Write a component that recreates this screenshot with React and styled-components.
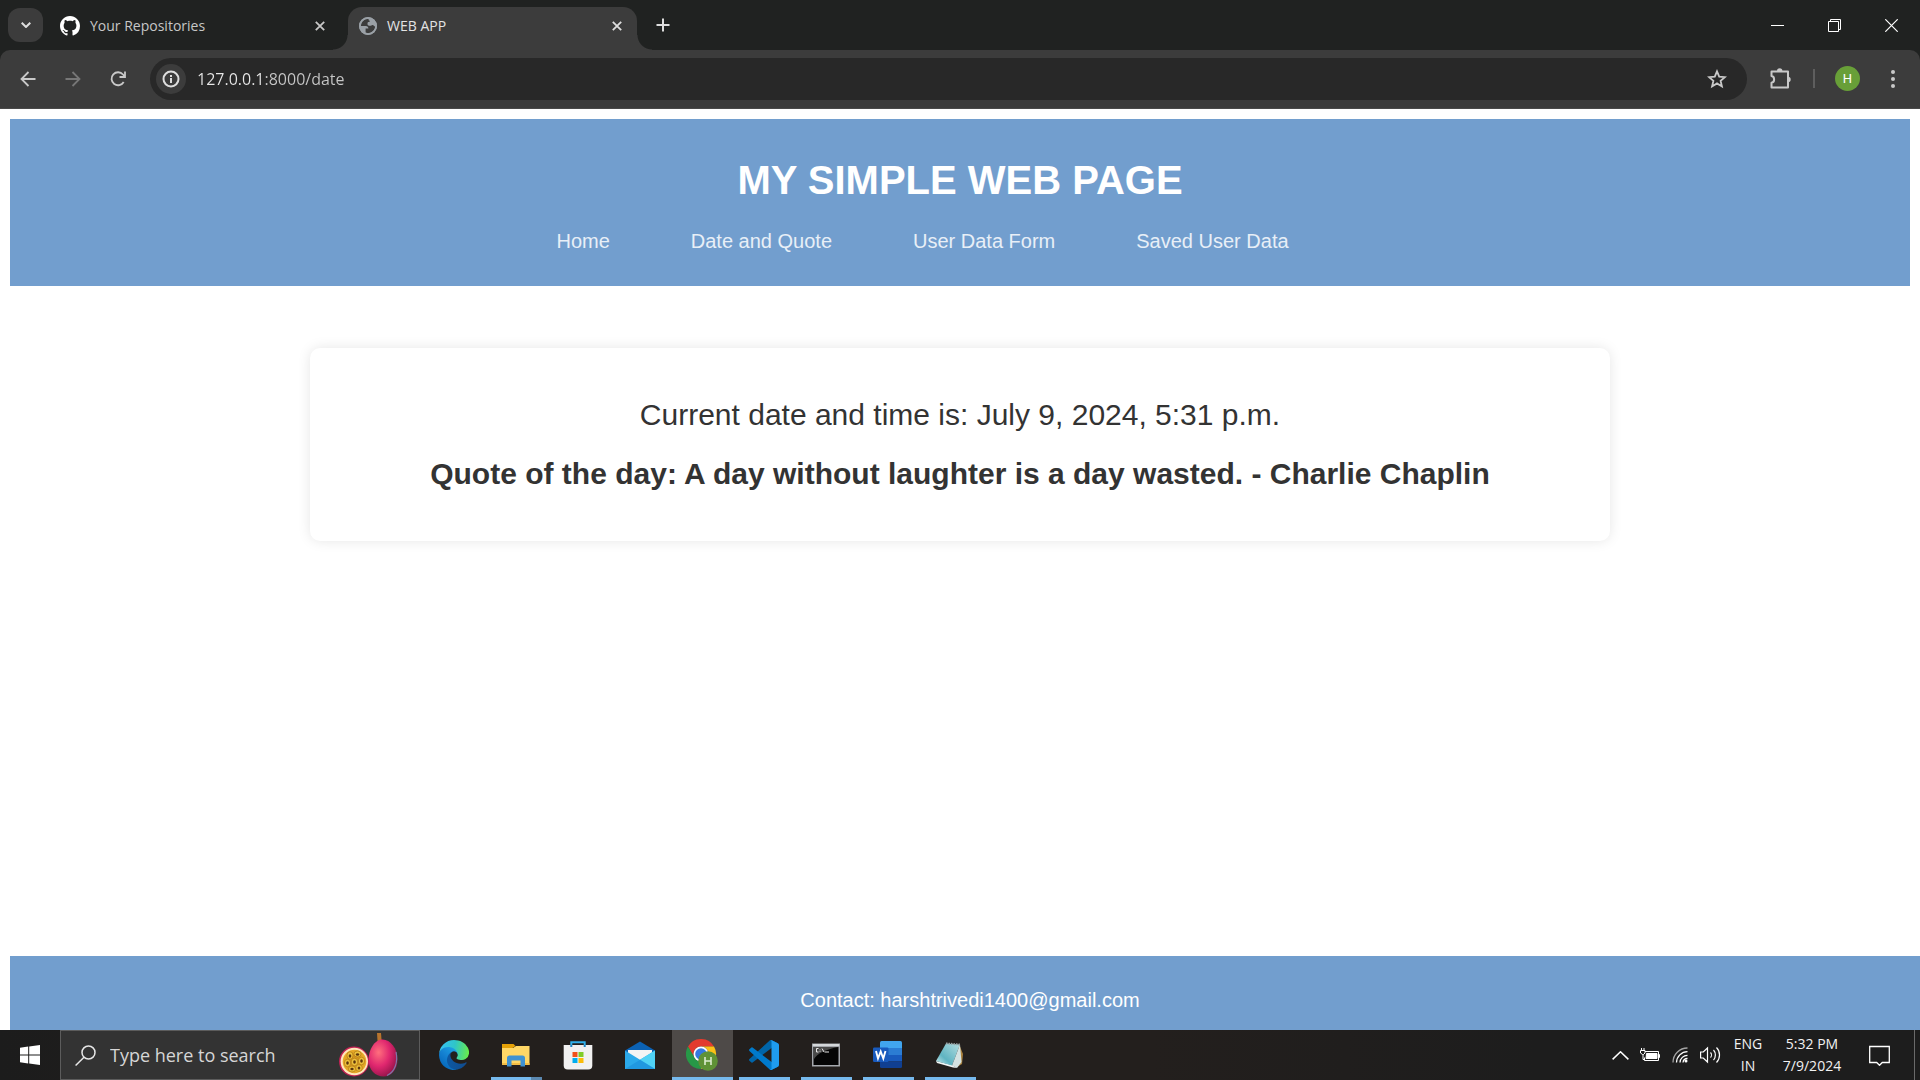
import React from "react";
import styled, { createGlobalStyle, css } from "styled-components";

const UI_FONT = `"Segoe UI", "Open Sans", "Noto Sans", sans-serif`;
const PAGE_FONT = `Arial, "Liberation Sans", sans-serif`;

const GlobalStyle = createGlobalStyle`
  *, *::before, *::after { box-sizing: border-box; }
  body { margin: 0; background: #fff; font-family: ${UI_FONT}; overflow: hidden; }
  button, input { font: inherit; }
  svg { display: block; flex: none; }
`;

const Screen = styled.div`
  display: flex;
  flex-direction: column;
  height: 100vh;
`;

/* ---------- browser chrome ---------- */

const TabStrip = styled.div`
  display: flex;
  align-items: center;
  height: 50px;
  padding-left: 8px;
  background: #202221;
`;

const plainButton = css`
  display: flex;
  align-items: center;
  justify-content: center;
  flex: none;
  padding: 0;
  border: 0;
  background: transparent;
  color: inherit;
`;

const IconButton = styled.button`
  ${plainButton}
  width: ${(p) => p.$w || 45}px;
  height: ${(p) => p.$h || 34}px;
  border-radius: ${(p) => p.$radius || 0}px;
  background: ${(p) => p.$bg || "transparent"};
  color: ${(p) => p.$color || "#dedede"};
`;

const Tab = styled.div`
  position: relative;
  display: flex;
  align-items: center;
  gap: 10px;
  width: ${(p) => (p.$active ? 289 : 305)}px;
  height: 43px;
  margin-top: 7px;
  padding: 0 10px 6px ${(p) => (p.$active ? 11 : 17)}px;
  border-radius: 14px 14px 0 0;
  background: ${(p) => (p.$active ? "#3c3c3c" : "transparent")};
  color: ${(p) => (p.$active ? "#e3e3e3" : "#c7c7c7")};
  font-size: 14px;
  line-height: 20px;

  ${(p) =>
    p.$active &&
    css`
      &::before,
      &::after {
        content: "";
        position: absolute;
        bottom: 0;
        width: 15px;
        height: 15px;
      }
      &::before {
        left: -15px;
        background: radial-gradient(circle at 0 0, transparent 14px, #3c3c3c 15px);
      }
      &::after {
        right: -15px;
        background: radial-gradient(circle at 100% 0, transparent 14px, #3c3c3c 15px);
      }
    `}
`;

const TabTitle = styled.span`
  flex: 1;
  white-space: nowrap;
`;

const WindowControls = styled.div`
  display: flex;
  margin-left: auto;
  height: 50px;
  align-items: center;
`;

const ToolbarBack = styled.div`
  background: #202221;
`;

const Toolbar = styled.div`
  display: flex;
  align-items: center;
  height: 59px;
  padding: 0 5px 1px;
  border-radius: 10px 10px 0 0;
  border-bottom: 1px solid #4a4a4a;
  background: #3c3c3c;
`;

const AddressBar = styled.label`
  display: flex;
  align-items: center;
  flex: 1;
  gap: 11px;
  height: 42px;
  margin-left: 10px;
  padding: 0 8px 0 6px;
  border-radius: 21px;
  background: #282828;
`;

const AddressInput = styled.input`
  flex: 1;
  min-width: 0;
  padding: 0;
  border: 0;
  outline: 0;
  background: linear-gradient(90deg, #e8e8e8 67px, #c7c7c7 67px);
  background-clip: text;
  color: transparent;
  font-size: 16px;
  line-height: 24px;
`;

const Divider = styled.span`
  width: 2px;
  height: 19px;
  margin-right: 10px;
  background: #5e5e5e;
`;

const Avatar = styled.span`
  display: flex;
  align-items: center;
  justify-content: center;
  width: 25px;
  height: 25px;
  border-radius: 50%;
  background: #689f38;
  color: #fff;
  font-size: 13px;
  line-height: 16px;
  font-family: Roboto, sans-serif;
`;

/* ---------- web page ---------- */

const Viewport = styled.div`
  display: flex;
  flex-direction: column;
  flex: 1;
  min-height: 0;
  padding-top: 10px;
  background: #fff;
  font-family: ${PAGE_FONT};
`;

const PageHeader = styled.header`
  margin: 0 10px;
  padding: 38px 0 33px;
  background: #729ece;
  text-align: center;
`;

const PageTitle = styled.h1`
  margin: 0;
  color: #fff;
  font-size: 40px;
  line-height: 46px;
`;

const Nav = styled.nav`
  display: flex;
  justify-content: center;
  gap: 81px;
  margin-top: 27px;
  padding-right: 75px;
`;

const NavLink = styled.a`
  color: #e8eff7;
  font-size: 20px;
  line-height: 23px;
  text-decoration: none;
`;

const Card = styled.main`
  display: flex;
  flex-direction: column;
  align-items: center;
  gap: 25px;
  width: 100%;
  max-width: 1300px;
  margin: 62px auto 0;
  padding: 50px 25px;
  border-radius: 10px;
  background: #fff;
  box-shadow: 0 0 13px rgba(0, 0, 0, 0.1);
`;

const CardText = styled.p`
  margin: 0;
  color: #333;
  font-size: 30px;
  font-weight: ${(p) => (p.$bold ? 700 : 400)};
  line-height: 34px;
`;

const PageFooter = styled.footer`
  display: flex;
  justify-content: center;
  height: 74px;
  margin: auto 0 0 10px;
  padding: 33px 0 0 10px;
  background: #729ece;
  color: #fff;
  font-size: 20px;
  line-height: 23px;
`;

/* ---------- taskbar ---------- */

const Taskbar = styled.div`
  display: flex;
  align-items: stretch;
  height: 50px;
  background: linear-gradient(90deg, #1c1c1c 0, #231f1d 420px, #231f1d 60%, #1d1d1d 80%);
  color: #fff;
`;

const StartButton = styled.button`
  ${plainButton}
  width: 60px;
`;

const SearchBox = styled.label`
  display: flex;
  align-items: center;
  width: 360px;
  padding: 0 20px 0 14px;
  gap: 14px;
  border: 1px solid #5c5c5c;
  background: #333;
`;

const SearchInput = styled.input`
  flex: 1;
  min-width: 0;
  padding: 0;
  border: 0;
  outline: 0;
  background: transparent;
  font-size: 18px;
  line-height: 26px;
  &::placeholder { color: #d6d6d6; opacity: 1; }
`;

const AppRow = styled.div`
  display: flex;
  gap: 1px;
  padding-left: 4px;
`;

const AppButton = styled.button`
  ${plainButton}
  position: relative;
  width: 61px;
  padding-right: 2px;
  background: ${(p) => (p.$active ? "#4e4a48" : "transparent")};
  &::after {
    content: "";
    position: absolute;
    right: ${(p) => (p.$active ? 0 : 5)}px;
    bottom: 0;
    left: ${(p) => (p.$active ? 0 : 5)}px;
    height: 3px;
    background: ${(p) =>
      !p.$running
        ? "transparent"
        : p.$stacked
          ? "linear-gradient(90deg, #76b9ed 40px, #5b88b0 40px)"
          : "#76b9ed"};
  }
`;

const Tray = styled.div`
  display: flex;
  align-items: center;
  margin-left: auto;
`;

const TrayButton = styled.button`
  ${plainButton}
  width: ${(p) => p.$w || 30}px;
  height: 50px;
`;

const TrayText = styled.button`
  ${plainButton}
  flex-direction: column;
  width: ${(p) => p.$w}px;
  height: 50px;
  color: #f2f2f2;
  font-size: 14px;
  line-height: 22px;
`;

const ShowDesktop = styled.button`
  ${plainButton}
  width: 6px;
  height: 50px;
  margin-left: 9px;
  border-left: 1px solid #6a6a6a;
`;

/* ---------- icons ---------- */

const Line = ({ w = 24, h, vb, sw = 2, children, ...rest }) => (
  <svg width={w} height={h || w} viewBox={vb || `0 0 ${w} ${h || w}`} fill="none" stroke="currentColor" strokeWidth={sw} {...rest}>
    {children}
  </svg>
);

const Close = () => (
  <Line w={10} sw={1.8}><path d="M.8.8l8.400 8.400M9.200.8L.8 9.200" /></Line>
);

const GithubMark = () => (
  <svg width="20" height="20" viewBox="0 0 16 16" fill="#fff">
    <path d="M8 0C3.58 0 0 3.58 0 8c0 3.54 2.29 6.53 5.47 7.59.4.07.55-.17.55-.38 0-.19-.01-.82-.01-1.49-2.01.37-2.53-.49-2.69-.94-.09-.23-.48-.94-.82-1.13-.28-.15-.68-.52-.01-.53.63-.01 1.08.58 1.23.82.72 1.21 1.87.87 2.33.66.07-.52.28-.87.51-1.07-1.78-.2-3.64-.89-3.64-3.95 0-.87.31-1.59.82-2.15-.08-.2-.36-1.02.08-2.12 0 0 .67-.21 2.2.82.64-.18 1.32-.27 2-.27s1.36.09 2 .27c1.53-1.04 2.2-.82 2.2-.82.44 1.1.16 1.92.08 2.12.51.56.82 1.27.82 2.15 0 3.07-1.87 3.75-3.65 3.95.29.25.54.73.54 1.48 0 1.07-.01 1.93-.01 2.2 0 .21.15.46.55.38A8.01 8.01 0 0 0 16 8c0-4.42-3.58-8-8-8z" />
  </svg>
);

const Globe = () => (
  <svg width="18" height="18" viewBox="0 0 18 18">
    <circle cx="9" cy="9" r="9" fill="#9aa0a6" />
    <path d="M9.600 2.100C5.300 1.600 1.800 5 1.800 9h5.100c1.600 0 2.500 1 2.500 2.400H6.600v4.300c4.700 1.700 9.300-1.500 9.600-6.200-1.300-.2-1.300-1.500-2.600-1.600-1-.1-1.300.9-2.600.9-1.700 0-2.500-.8-2.500-1.900 0-1.300 1-2 2.400-1.900.9 0 .8-1.300-.2-1.300C9.400 3.700 9.600 2.800 9.600 2.100z" fill="#3c3c3c" />
    <path d="M10.500 2c1 1.300.6 2.900-.9 3.100-1.200.1-1.200 1.600.100 1.700 1.500.1 1.200 1.200 2.600.9 1.500-.4 2.600.4 3.900 1.300C16.500 5.500 14 2.500 10.500 2z" fill="#9aa0a6" />
    <circle cx="9" cy="9" r="8.100" fill="none" stroke="#9aa0a6" strokeWidth="1.800" />
  </svg>
);

const WindowsLogo = () => (
  <svg width="20" height="20" viewBox="0 0 20 20" fill="#fff">
    <path d="M0 2.800L8.200 1.600V9.500H0zM9.200 1.500L20 0v9.500H9.200zM0 10.500h8.200v7.900L0 17.200zM9.200 10.500H20V20L9.200 18.500z" />
  </svg>
);

const Fruit = () => (
  <svg width="60" height="46" viewBox="0 0 60 46">
    <defs>
      <radialGradient id="fruit" cx=".35" cy=".35" r=".75">
        <stop offset="0" stopColor="#ff6f7d" />
        <stop offset=".5" stopColor="#e0276f" />
        <stop offset="1" stopColor="#8b1145" />
      </radialGradient>
      <radialGradient id="pulp">
        <stop offset="0" stopColor="#c98a18" />
        <stop offset="1" stopColor="#e8ab28" />
      </radialGradient>
    </defs>
    <path d="M38 1h4l.8 10h-4.200z" fill="#b8742e" />
    <path d="M43.500 7.500c8 0 15 9 15 20 0 10-6 17-14 17S29.500 38 29.500 28 35.500 7.500 43.500 7.500z" fill="url(#fruit)" />
    <path d="M57 20c2 9-.5 20-9 23.500" fill="none" stroke="#7d78a8" strokeWidth="1.200" />
    <circle cx="15" cy="29.500" r="15" fill="#c22154" />
    <circle cx="15.300" cy="29.500" r="13.700" fill="#ffe6bd" />
    <circle cx="15.500" cy="29.500" r="11.800" fill="url(#pulp)" />
    <g fill="#ecc03c" stroke="#a96f10" strokeWidth=".6">
      <ellipse cx="11" cy="23.500" rx="3" ry="3.800" /><ellipse cx="18.500" cy="22" rx="3.600" ry="3" /><ellipse cx="8.500" cy="31" rx="3.200" ry="3.800" />
      <ellipse cx="15.500" cy="30" rx="3.300" ry="3.800" /><ellipse cx="22.500" cy="29" rx="3.200" ry="3.800" /><ellipse cx="13" cy="37" rx="3.600" ry="3" /><ellipse cx="20" cy="36" rx="3.300" ry="3.300" />
    </g>
    <g fill="#5c350e">
      <ellipse cx="11" cy="24" rx="1.300" ry="1.800" /><ellipse cx="18.500" cy="22.500" rx="1.700" ry="1.300" /><ellipse cx="8.500" cy="31" rx="1.300" ry="1.800" />
      <ellipse cx="15.500" cy="30" rx="1.300" ry="1.800" /><ellipse cx="22.500" cy="29" rx="1.300" ry="1.800" /><ellipse cx="13" cy="37" rx="1.700" ry="1.300" /><ellipse cx="20" cy="36" rx="1.300" ry="1.600" />
    </g>
  </svg>
);

const Edge = () => (
  <svg width="30" height="30" viewBox="0 0 256 256">
    <defs>
      <linearGradient id="e1" x1="63" y1="178" x2="242" y2="178" gradientUnits="userSpaceOnUse">
        <stop offset="0" stopColor="#0c59a4" /><stop offset="1" stopColor="#114a8b" />
      </linearGradient>
      <linearGradient id="e2" x1="150" y1="100" x2="40" y2="230" gradientUnits="userSpaceOnUse">
        <stop offset="0" stopColor="#1b9de2" /><stop offset=".5" stopColor="#1480d0" /><stop offset="1" stopColor="#0669bc" />
      </linearGradient>
      <linearGradient id="e3" x1="10" y1="60" x2="250" y2="100" gradientUnits="userSpaceOnUse">
        <stop offset="0" stopColor="#35c1f1" /><stop offset=".5" stopColor="#2fc5c8" /><stop offset="1" stopColor="#66eb4e" />
      </linearGradient>
    </defs>
    <path d="M231 190.500c-3.400 1.800-6.900 3.400-10.500 4.700a101 101 0 0 1-35.700 6.400c-47 0-88-32.300-88-73.800a31.300 31.300 0 0 1 16.400-27.300c-42.500 1.800-53.500 46.200-53.500 72 0 73.200 67.400 80.600 82 80.600 7.800 0 19.600-2.300 26.700-4.600l1.300-.4a127.900 127.900 0 0 0 66.400-52.700 4 4 0 0 0-5.100-4.900z" fill="url(#e1)" />
    <path d="M105.700 241.400a79.200 79.200 0 0 1-22.700-21.300A80.700 80.700 0 0 1 112.600 100.600c3.200-1.500 8.500-4.100 15.600-4a32.400 32.400 0 0 1 25.700 13 31.900 31.900 0 0 1 6.400 18.700c0-.2 24.500-79.600-80-79.600C36.400 48.700.3 90.400.3 127a130 130 0 0 0 12.100 56A128 128 0 0 0 169 249.800a75.500 75.500 0 0 1-63.100-8.300z" fill="url(#e2)" />
    <path d="M152.300 148.900c-.8 1-3.300 2.500-3.300 5.700 0 2.600 1.700 5.100 4.700 7.200 14.500 10 41.700 8.700 41.800 8.700a60 60 0 0 0 30.500-8.400A61.800 61.800 0 0 0 256.500 108.800c.3-22.400-8-37.300-11.300-43.900C223.900 23.200 177.700 0 128.300 0A128 128 0 0 0 .3 126.200c.5-36.500 36.800-66 80-66 3.500 0 23.500.3 42 10a72.600 72.600 0 0 1 30.900 29.300c6.100 10.600 7.200 24.100 7.200 29.500s-2.700 13.300-8.100 20z" fill="url(#e3)" />
  </svg>
);

const Folder = () => (
  <svg width="28" height="24" viewBox="0 0 28 24">
    <path d="M0 5h11l3-2h13.500v19H0z" fill="#ffd766" />
    <path d="M0 1h11.500l2 2-3 2H0z" fill="#e5a107" />
    <path d="M0 20h27.500v2H0z" fill="#f3bd45" />
    <path d="M7.500 12.500h13A2.500 2.500 0 0 1 23 15v8.500h-4.500v-6h-9v6H5V15a2.500 2.500 0 0 1 2.500-2.500z" fill="#3f92d2" />
  </svg>
);

const Store = () => (
  <svg width="30" height="30" viewBox="0 0 30 30">
    <path d="M8.300 8V2.200h13.400V8" fill="none" stroke="#2fb0ec" strokeWidth="2" />
    <path d="M.7 5h28.600v20.500a4 4 0 0 1-4 4H4.700a4 4 0 0 1-4-4z" fill="#f1f1f1" />
    <path d="M7.300 5h2v2h-2zM20.700 5h2v2h-2z" fill="#1c84c5" />
    <path d="M9.500 12h5v5h-5z" fill="#f1511b" /><path d="M15.500 12h5v5h-5z" fill="#80cc28" />
    <path d="M9.500 18h5v5h-5z" fill="#00adef" /><path d="M15.500 18h5v5h-5z" fill="#fbbc09" />
  </svg>
);

const MailApp = () => (
  <svg width="30" height="28" viewBox="0 0 30 28">
    <path d="M0 9.500L15 .5l15 9V12H0z" fill="#0b62b5" /><path d="M3 9h24v10H3z" fill="#f4f4f4" />
    <path d="M0 9.500l15 9.200 15-9.200V28H0z" fill="#2ba9ea" /><path d="M30 9.500V28L15 18.700z" fill="#50d2f5" />
    <path d="M0 28l15-9.300L30 28z" fill="#1c91dc" opacity=".7" />
  </svg>
);

const ChromeApp = () => (
  <svg width="32" height="32" viewBox="0 0 32 32">
    <path d="M2 7.500A15 15 0 0 1 28 7.500H15A7.500 7.500 0 0 0 8.500 18.750z" fill="#e33b2e" />
    <path d="M2 7.500L8.500 18.750A7.500 7.500 0 0 0 21.500 18.750L15 30A15 15 0 0 1 2 7.500z" fill="#279847" />
    <path d="M28 7.500A15 15 0 0 1 15 30L21.500 18.750A7.500 7.500 0 0 0 15 7.500z" fill="#fbc116" />
    <circle cx="15" cy="15" r="7.500" fill="#fff" /><circle cx="15" cy="15" r="5.800" fill="#3479e0" />
    <circle cx="22" cy="22" r="9.800" fill="#5f9236" />
    <path d="M19 18v8M25 18v8M19 22h6" stroke="#dcebcf" strokeWidth="1.600" />
  </svg>
);

const CodeApp = () => (
  <svg width="30" height="30" viewBox="0 0 100 100">
    <path d="M96 11L76 1a6 6 0 0 0-7 1L1.500 63.500a4 4 0 0 0 0 6l5.500 5a4 4 0 0 0 5 .2L93 13c3-2 7 0 7 3.500V16a6 6 0 0 0-4-5z" fill="#0065a9" />
    <path d="M96 89L76 99a6 6 0 0 1-7-1L1.500 36.500a4 4 0 0 1 0-6l5.500-5a4 4 0 0 1 5-.2L93 87c3 2 7 0 7-3.500V84a6 6 0 0 1-4 5z" fill="#007acc" />
    <path d="M76 99a6 6 0 0 1-7-1c2 2 6 .7 6-2.600V4.600C75 1.300 71 0 69 2a6 6 0 0 1 7-1l20 10a6 6 0 0 1 4 5.600v67A6 6 0 0 1 96 89z" fill="#1f9cf0" />
  </svg>
);

const Terminal = () => (
  <svg width="28" height="24" viewBox="0 0 28 24">
    <path d="M0 .5h28v23H0z" fill="#a5a8ad" /><path d="M1 1h26v2H1z" fill="#d5d8db" />
    <path d="M1.500 4h25v18h-25z" fill="#050505" /><path d="M1.500 4h25C15 6 5 10 1.500 17z" fill="#494949" />
    <path d="M6.500 5.500H4.500v3.500h2M8 6.500v.8M8 8.300v.7M10 5.500l2 3.500M12.500 9H17" fill="none" stroke="#e8e8e8" strokeWidth="1" />
  </svg>
);

const WordApp = () => (
  <svg width="30" height="28" viewBox="0 0 30 28">
    <path d="M7 1.500A1.500 1.500 0 0 1 8.500 0h19A1.500 1.500 0 0 1 29 1.500V7H7z" fill="#41a5ee" />
    <path d="M7 7h22v7H7z" fill="#2b7cd3" /><path d="M7 14h22v6.500H7z" fill="#185abd" />
    <path d="M7 20.500h22v5a1.500 1.500 0 0 1-1.500 1.500h-19A1.500 1.500 0 0 1 7 25.500z" fill="#103f91" />
    <rect y="6.500" width="15.500" height="14.500" rx="1.300" fill="#185abd" />
    <path d="M3 10l2 7.500 2.700-7 2.600 7 2.200-7.500" fill="none" stroke="#fff" strokeWidth="1.900" />
  </svg>
);

const Notepad = () => (
  <svg width="30" height="28" viewBox="0 0 30 28">
    <defs>
      <linearGradient id="pad" x1="0" y1="1" x2="1" y2="0">
        <stop offset="0" stopColor="#d5f0f1" />
        <stop offset=".35" stopColor="#5fb4c2" />
        <stop offset="1" stopColor="#b5dde0" />
      </linearGradient>
    </defs>
    <path d="M24 3l4 10-1 10-5 3z" fill="#a9803c" />
    <path d="M1 20l16 4 5 3-4-.500L2 22z" fill="#f2f6f5" />
    <path d="M11 2.500L25 3.500 17 24.500 1 20z" fill="url(#pad)" />
    <path d="M25 3.500L26.500 21l-4.500 6-5-2.500z" fill="#d4e3e3" />
    <path d="M11 2.500L25 3.500" stroke="#98a3a5" strokeWidth="2" strokeDasharray="1.500 1" />
  </svg>
);

const apps = [
  { name: "Microsoft Edge", icon: <Edge /> },
  { name: "File Explorer", icon: <Folder />, running: true, stacked: true },
  { name: "Microsoft Store", icon: <Store /> },
  { name: "Mail", icon: <MailApp /> },
  { name: "Google Chrome", icon: <ChromeApp />, running: true, active: true },
  { name: "Visual Studio Code", icon: <CodeApp />, running: true },
  { name: "Command Prompt", icon: <Terminal />, running: true },
  { name: "Word", icon: <WordApp />, running: true },
  { name: "Notepad", icon: <Notepad />, running: true },
];

const links = ["Home", "Date and Quote", "User Data Form", "Saved User Data"];

function BrowserChrome() {
  return (
    <>
      <TabStrip>
        <IconButton $w={35} $radius={12} $bg="#3c3c3c" aria-label="Search tabs">
          <Line w={10} h={6} sw={2}><path d="M.7.7L5 5 9.300.7" /></Line>
        </IconButton>
        <Tab>
          <GithubMark />
          <TabTitle>Your Repositories</TabTitle>
          <IconButton $w={36} $h={24} $color="#c7c7c7" aria-label="Close tab"><Close /></IconButton>
        </Tab>
        <Tab $active>
          <Globe />
          <TabTitle>WEB APP</TabTitle>
          <IconButton $w={20} $h={20} aria-label="Close tab"><Close /></IconButton>
        </Tab>
        <IconButton $w={52} aria-label="New tab">
          <Line w={14} sw={2}><path d="M7 .5v13M.5 7h13" /></Line>
        </IconButton>
        <WindowControls>
          <IconButton $w={57} aria-label="Minimize">
            <Line w={13} h={1} sw={1} stroke="#fff"><path d="M0 .5h13" /></Line>
          </IconButton>
          <IconButton $w={57} aria-label="Restore">
            <Line w={13} sw={1} stroke="#fff"><path d="M.5 2.500h10v10H.5zM2.500 2.500v-2h10v10h-2" /></Line>
          </IconButton>
          <IconButton $w={57} aria-label="Close">
            <Line w={13} sw={1.2} stroke="#fff"><path d="M.3.3l12.400 12.400M12.700.3L.3 12.700" /></Line>
          </IconButton>
        </WindowControls>
      </TabStrip>
      <ToolbarBack>
        <Toolbar>
          <IconButton $color="#c9c9c9" aria-label="Back">
            <Line w={16} sw={1.8}><path d="M15.500 8H1.800M8.500 1L1.500 8l7 7" /></Line>
          </IconButton>
          <IconButton $color="#777" aria-label="Forward">
            <Line w={16} sw={1.8}><path d="M.5 8h13.700M7.500 1l7 7-7 7" /></Line>
          </IconButton>
          <IconButton $color="#c9c9c9" aria-label="Reload">
            <Line w={16} sw={1.8}><path d="M13.700 11A6.500 6.500 0 1 1 13 3.500L15 5.800M15 .5v5.500H9.500" /></Line>
          </IconButton>
          <AddressBar>
            <IconButton $w={30} $h={30} $radius={15} $bg="#3c3c3c" aria-label="Site information">
              <Line w={18}><circle cx="9" cy="9" r="7.500" /><path d="M9 8v5M9 5v2" /></Line>
            </IconButton>
            <AddressInput aria-label="Address" defaultValue="127.0.0.1:8000/date" />
            <IconButton $color="#c9c9c9" aria-label="Bookmark">
              <Line w={20} sw={1.8}><path d="M10 2.300l2.200 5.300 5.700.5-4.300 3.700 1.300 5.600-4.900-3-4.900 3 1.300-5.600L2.100 8.100l5.700-.5z" /></Line>
            </IconButton>
          </AddressBar>
          <IconButton $w={66} $color="#c9c9c9" aria-label="Extensions">
            <Line w={21}>
              <path d="M1.500 3.500h16.500v16H1.500v-4.800c3.500-.6 3.500-6 0-6.600z" strokeLinejoin="round" />
              <path d="M7 3a2.700 2.700 0 0 1 5.400 0zM18 8.800a2.700 2.700 0 0 1 0 5.400z" fill="currentColor" stroke="none" />
            </Line>
          </IconButton>
          <Divider />
          <IconButton $w={45} aria-label="Profile"><Avatar>H</Avatar></IconButton>
          <IconButton $w={45} $color="#c9c9c9" aria-label="Menu">
            <svg width="4" height="18" viewBox="0 0 4 18" fill="currentColor">
              <circle cx="2" cy="2" r="2" /><circle cx="2" cy="9" r="2" /><circle cx="2" cy="16" r="2" />
            </svg>
          </IconButton>
        </Toolbar>
      </ToolbarBack>
    </>
  );
}

function WebPage() {
  return (
    <Viewport>
      <PageHeader>
        <PageTitle>MY SIMPLE WEB PAGE</PageTitle>
        <Nav>
          {links.map((label) => (
            <NavLink key={label} href="#">{label}</NavLink>
          ))}
        </Nav>
      </PageHeader>
      <Card>
        <CardText>Current date and time is: July 9, 2024, 5:31 p.m.</CardText>
        <CardText $bold>Quote of the day: A day without laughter is a day wasted. - Charlie Chaplin</CardText>
      </Card>
      <PageFooter>Contact: harshtrivedi1400@gmail.com</PageFooter>
    </Viewport>
  );
}

function WindowsTaskbar() {
  return (
    <Taskbar>
      <StartButton aria-label="Start"><WindowsLogo /></StartButton>
      <SearchBox>
        <Line w={21} sw={1.5} stroke="#e6e6e6"><circle cx="13.500" cy="7.500" r="6.500" /><path d="M9 12.300L.6 20.500" /></Line>
        <SearchInput aria-label="Search" placeholder="Type here to search" />
        <Fruit />
      </SearchBox>
      <AppRow>
        {apps.map((app) => (
          <AppButton
            key={app.name}
            aria-label={app.name}
            $running={app.running}
            $active={app.active}
            $stacked={app.stacked}
          >
            {app.icon}
          </AppButton>
        ))}
      </AppRow>
      <Tray>
        <TrayButton aria-label="Show hidden icons">
          <Line w={17} h={9} sw={1.5}><path d="M.6 8.400L8.500.8l7.900 7.600" /></Line>
        </TrayButton>
        <TrayButton aria-label="Battery">
          <Line w={20} h={14} sw={1}>
            <path d="M5 3.500h13.500v9h-14V9.500M18.500 6.500h1v3h-1M1.500 0v2.500M4 0v2.500M.5 2.500h4.500v2.500L3.500 6.500h-1L.5 5zM3 6.500v5h1.500" />
            <path d="M6.500 5.500h10.500v5H6z" fill="currentColor" />
          </Line>
        </TrayButton>
        <TrayButton aria-label="Network">
          <Line w={16} sw={1.3}>
            <path d="M1 15.500A14.500 14.500 0 0 1 15.500 1" opacity=".6" />
            <path d="M4.500 15.500A11 11 0 0 1 15.500 4.700M8 15.500a7.500 7.500 0 0 1 7.500-7.200M11 15.500a4.500 4.500 0 0 1 4.500-4" />
            <circle cx="14" cy="14" r="1.500" fill="currentColor" stroke="none" />
          </Line>
        </TrayButton>
        <TrayButton aria-label="Volume">
          <Line w={21} h={18} sw={1.2}>
            <path d="M.6 6h2.700L7.500 2v14l-4.200-4H.6zM10.500 6.500c1.200 1.300 1.200 3.700 0 5M13.500 4c2.500 2.700 2.500 7.300 0 10M16.500 1.500c4 4 4 11 0 15" />
          </Line>
        </TrayButton>
        <TrayText $w={46}><span>ENG</span><span>IN</span></TrayText>
        <TrayText $w={82}><span>5:32 PM</span><span>7/9/2024</span></TrayText>
        <TrayButton $w={52} aria-label="Notifications">
          <Line w={21} h={21} sw={1.3}><path d="M.7 1.500h19.600v16h-7l-2.800 2.800-2.800-2.800h-7z" /></Line>
        </TrayButton>
        <ShowDesktop aria-label="Show desktop" />
      </Tray>
    </Taskbar>
  );
}

export default function App() {
  return (
    <Screen>
      <GlobalStyle />
      <BrowserChrome />
      <WebPage />
      <WindowsTaskbar />
    </Screen>
  );
}
